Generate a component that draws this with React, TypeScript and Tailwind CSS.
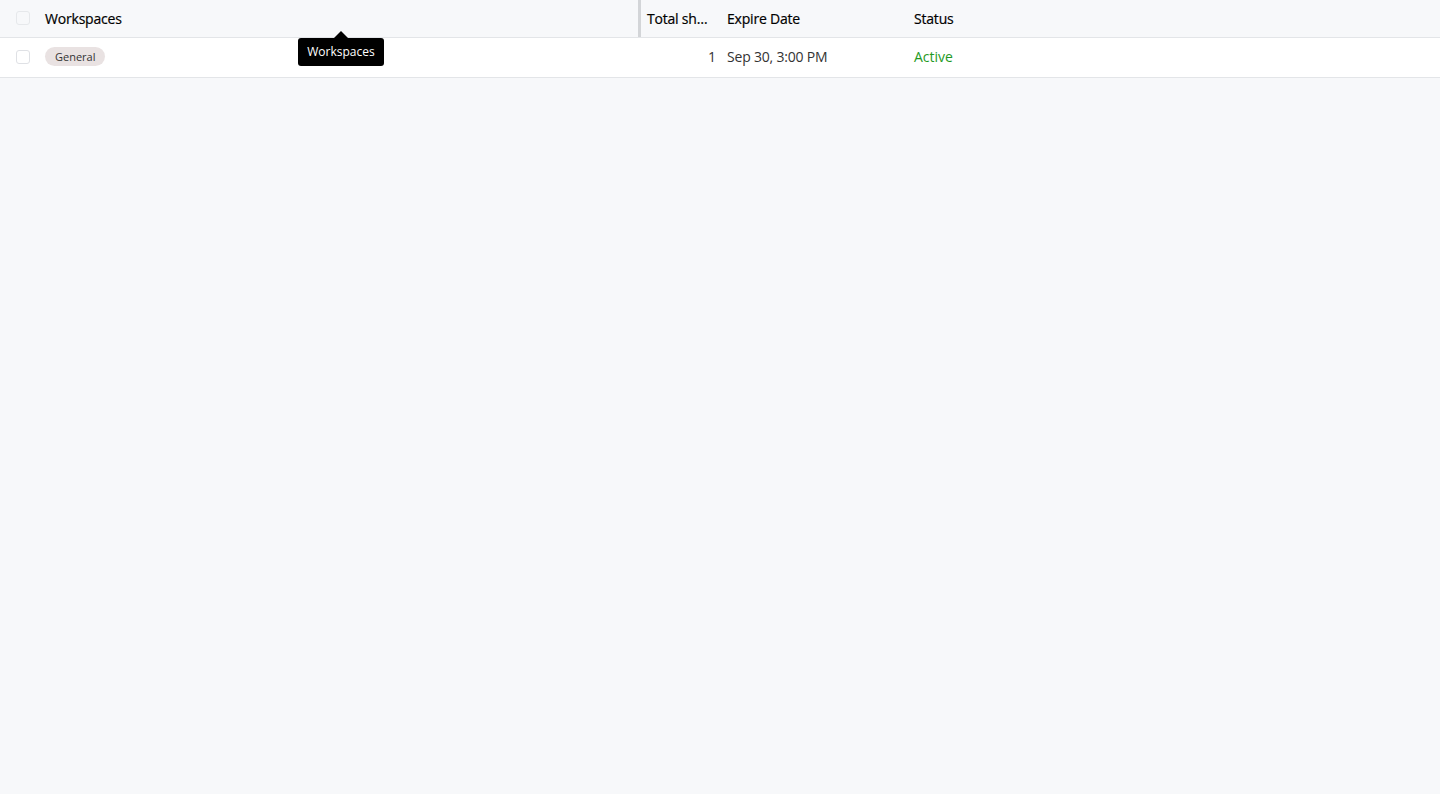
import React from "react";

const font = { fontFamily: '"Open Sans", "Noto Sans", sans-serif' };

function Checkbox({ head }: { head?: boolean }) {
  return (
    <div
      className={
        head
          ? "h-[14px] w-[14px] rounded-[3px] border border-[#e6e8eb] bg-[#f7f8fa]"
          : "h-[14px] w-[14px] rounded-[3px] border border-[#dfe1e5] bg-white"
      }
    />
  );
}

export default function App() {
  return (
    <div className="min-h-[794px] w-full bg-[#f7f8fa] text-[14px] text-[#1c1c1c]" style={font}>
      <div className="flex h-[38px] items-center border-b border-[#e3e5e8] pb-[1px] text-black [-webkit-text-stroke:0.2px_black]">
        <div className="flex w-[37px] shrink-0 pl-[16px]">
          <Checkbox head />
        </div>
        <div className="flex h-full w-[601px] shrink-0 items-center pl-[8px] tracking-[-0.2px]">Workspaces</div>
        <div className="-mb-[1px] h-[37px] w-[3px] shrink-0 self-start bg-[#d3d5d8]" />
        <div className="w-[78px] shrink-0 truncate pl-[6px] pr-[6px] tracking-[-0.2px]">Total shares</div>
        <div className="w-[187px] shrink-0 pl-[8px] tracking-[-0.2px]">Expire Date</div>
        <div className="pl-[8px] tracking-[-0.2px]">Status</div>
      </div>
      <div className="relative flex h-[40px] items-center border-b border-[#e3e5e8] bg-white pb-[2px]">
        <div className="flex w-[37px] shrink-0 pl-[16px]">
          <Checkbox />
        </div>
        <div className="flex w-[604px] shrink-0 items-center pl-[8px]">
          <span className="rounded-full bg-[#e9e2e2] px-[10px] py-[1px] text-[11px] leading-[17px] text-[#333]">
            General
          </span>
        </div>
        <div className="w-[78px] shrink-0 pr-[3px] text-right text-[#333]">1</div>
        <div className="w-[187px] shrink-0 pl-[8px] tracking-[-0.2px] text-[#333]">Sep 30, 3:00 PM</div>
        <div className="pl-[8px] text-[#1f9a1f]">Active</div>

        <div className="absolute left-[298px] top-[0px] z-10 flex h-[28px] w-[86px] items-center justify-center rounded-[3px] bg-black text-[12px] text-white">
          <div className="absolute -top-[7px] left-1/2 h-0 w-0 -translate-x-1/2 border-x-[7px] border-b-[7px] border-x-transparent border-b-black" />
          Workspaces
        </div>
      </div>
    </div>
  );
}
